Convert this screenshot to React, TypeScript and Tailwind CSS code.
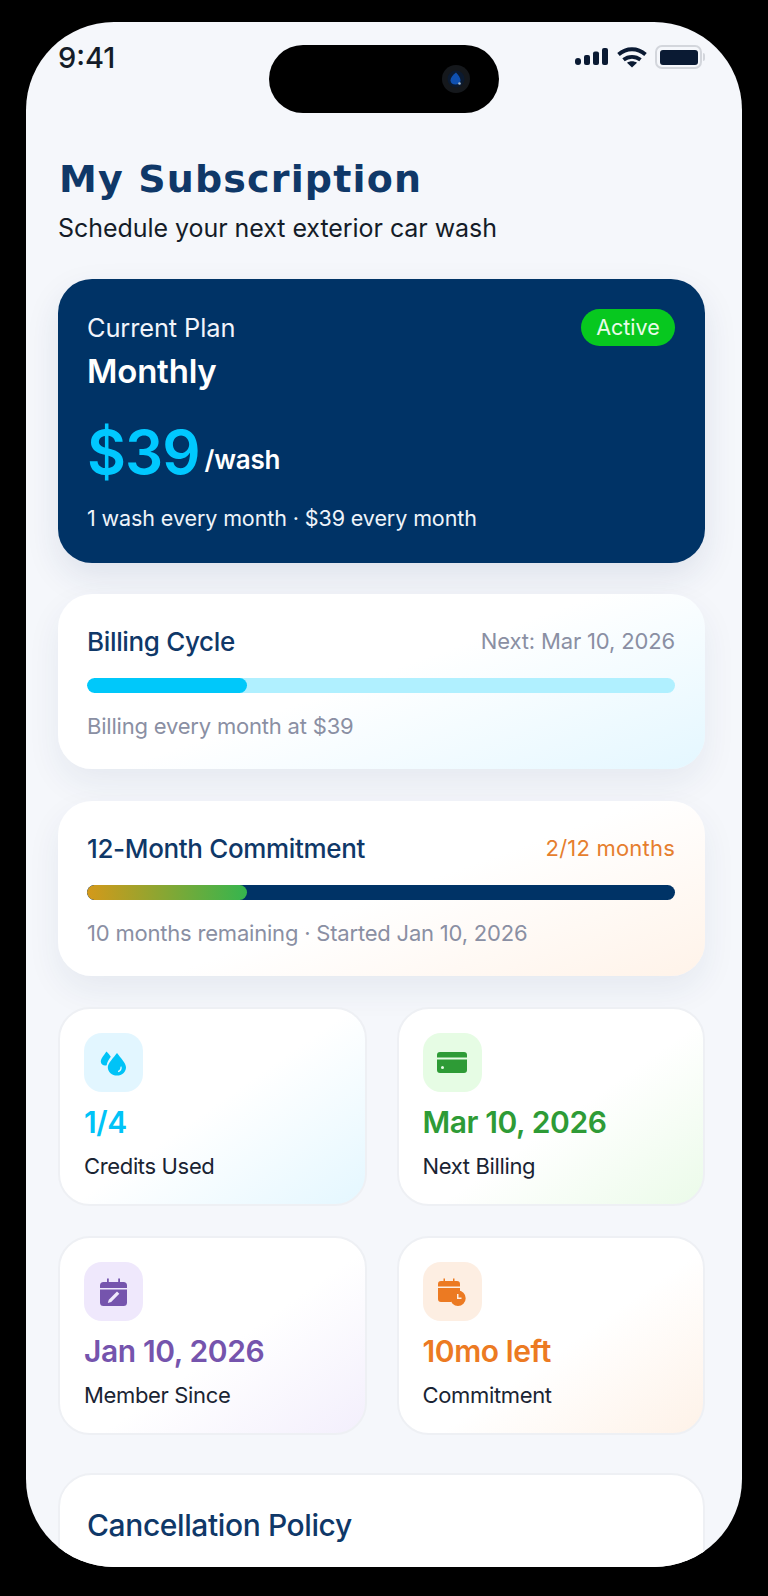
import React from "react";

const Signal = () => (
  <svg width="33" height="18" viewBox="0 0 33 18" fill="#0a1a33">
    <rect x="0" y="10" width="6" height="7" rx="3" />
    <rect x="9" y="7" width="6" height="10" rx="2" />
    <rect x="18" y="3.5" width="6" height="13.5" rx="2" />
    <rect x="27" y="0" width="6" height="17" rx="2" />
  </svg>
);

const Wifi = () => (
  <svg width="30" height="21" viewBox="0 0 30 21" fill="none" stroke="#0a1a33" strokeWidth="3.8">
    <path d="M1.500 7.500C9.500 0.500 20.500 0.500 28.500 7.500" />
    <path d="M6.500 12.800C11.500 8.800 18.500 8.800 23.500 12.800" />
    <path d="M15 20.500L10 15.800C12.800 13.800 17.200 13.800 20 15.800Z" fill="#0a1a33" stroke="none" />
  </svg>
);

const Battery = () => (
  <div className="flex items-center">
    <div className="flex h-[24px] w-[47px] items-center justify-center rounded-[7px] border-[2px] border-[#d3d6dc]">
      <div className="h-[15px] w-[38px] rounded-[3px] bg-[#0a1a33]" />
    </div>
    <div className="ml-[1px] h-[8px] w-[2px] rounded-r-[2px] bg-[#d3d6dc]" />
  </div>
);

const Camera = () => (
  <svg width="28" height="28" viewBox="0 0 28 28">
    <circle cx="14" cy="14" r="14" fill="#15181c" />
    <circle cx="14" cy="14" r="8.500" fill="#0b1a30" />
    <path d="M14 7.500C10.500 10 8.500 13 8.500 15.500C8.500 18 10.500 19.500 13.500 19.500C16.500 19.500 18.500 18 18.500 15.500C18.500 13 16.500 10 14 7.500Z" fill="#0f50b0" />
    <circle cx="17.500" cy="18.500" r="1.300" fill="#9fb4c8" />
  </svg>
);

const Drops = () => (
  <svg width="27" height="26" viewBox="0 0 27 26" fill="#00c3f7">
    <path d="M6.500 1.500C4 5 0.800 8.800 0.800 11.500C0.800 14 3 15.600 5 15.600C5.600 15.600 6.200 15.400 6.700 15.200C7 12.200 9 9.300 10.800 6.800C9.800 5 8 3.200 6.500 1.500Z" />
    <path fillRule="evenodd" d="M17 3C13.500 8 7.800 13 7.800 17.300C7.800 22 12 25.600 17 25.600C22 25.600 26 22 26 17.300C26 13 20.500 8 17 3ZM21.600 16.500C22.200 19.200 20.800 21.600 18.200 22.200L17.900 20.900C19.800 20.400 20.800 18.700 20.400 16.800Z" />
  </svg>
);

const CardIcon = () => (
  <svg width="30" height="21" viewBox="0 0 30 21" fill="#2e9b36">
    <path d="M0 5.500V3a3 3 0 0 1 3-3h24a3 3 0 0 1 3 3v2.500Z" />
    <path fillRule="evenodd" d="M0 7.500h30V18a3 3 0 0 1-3 3H3a3 3 0 0 1-3-3ZM5.500 14a1.500 1.500 0 1 0 0 3a1.500 1.500 0 0 0 0-3Z" />
  </svg>
);

const CalEdit = () => (
  <svg width="27" height="28" viewBox="0 0 27 28" fill="#7554ad">
    <path d="M7 0.500h1.800V4H18.200V0.500H20V4H23.500A3.500 3.500 0 0 1 27 7.500V10H0V7.500A3.500 3.500 0 0 1 3.500 4H7Z" />
    <path fillRule="evenodd" d="M0 11.500H27V24.500A3.500 3.500 0 0 1 23.500 28H3.500A3.500 3.500 0 0 1 0 24.500ZM17 13.500L8.800 21.700L7.800 25L11.200 24L19.300 15.800Z" />
  </svg>
);

const CalClock = () => (
  <svg width="28" height="28" viewBox="0 0 28 28" fill="#ec7a22">
    <path d="M5.500 0.500H7V3H15V0.500H16.500V3H19A3 3 0 0 1 22 6V8.500H0V6A3 3 0 0 1 3 3H5.500Z" />
    <path d="M0 10H22V13.200A8 8 0 0 0 13.500 24H3A3 3 0 0 1 0 21Z" />
    <path fillRule="evenodd" d="M20 12.500A7.700 7.700 0 1 1 20 27.900A7.700 7.700 0 0 1 20 12.500ZM19 16V21H23.500V19.500H20.500V16Z" />
  </svg>
);

const cardCls =
  "rounded-[34px] pl-[29px] pr-[30px] shadow-[0_14px_34px_rgba(30,50,100,0.07)] h-[175px] flex flex-col";

function ProgressCard(p: {
  title: string;
  right: string;
  rightCls: string;
  note: string;
  grad: string;
  track: string;
  fill: string;
  mt: string;
}) {
  return (
    <div className={`${cardCls} ${p.mt} ${p.grad}`}>
      <div className="mt-[29px] flex h-[36px] items-center justify-between">
        <span className="text-[26px] font-medium tracking-[-0.35px] text-[#0f3868]">{p.title}</span>
        <span className={`text-[22px] ${p.rightCls}`}>{p.right}</span>
      </div>
      <div className={`mt-[19px] h-[15px] w-full overflow-hidden rounded-full ${p.track}`}>
        <div className={`h-full w-[160px] rounded-full ${p.fill}`} />
      </div>
      <div className="mt-[18px] h-[30px] text-[22px] leading-[30px] tracking-[-0.2px] text-[#8a8fa3]">{p.note}</div>
    </div>
  );
}

function Tile(p: {
  icon: React.ReactNode;
  iconBg: string;
  value: string;
  valueCls: string;
  label: string;
  grad: string;
}) {
  return (
    <div className={`h-[199px] rounded-[32px] border-[2px] border-[#eef0f4] px-[24px] pt-[24px] ${p.grad}`}>
      <div className={`flex h-[59px] w-[59px] items-center justify-center rounded-[18px] ${p.iconBg}`}>{p.icon}</div>
      <div className={`mt-[11px] h-[38px] text-[30px] leading-[38px] font-semibold tracking-[-0.4px] ${p.valueCls}`}>{p.value}</div>
      <div className="mt-[10px] h-[30px] text-[22px] leading-[30px] tracking-[-0.35px] text-[#1a2433]">{p.label}</div>
    </div>
  );
}

export default function App() {
  return (
    <div className="h-[1596px] w-[768px] overflow-hidden bg-black pt-[22px] pl-[26px] font-['Inter',sans-serif]">
      <div className="relative h-[1545px] w-[716px] overflow-hidden rounded-[88px] bg-[#f5f7fb] pr-[37px] pl-[32px]">
        <div className="absolute top-[23px] left-[243px] flex h-[68px] w-[230px] items-center justify-end rounded-[34px] bg-black pr-[29px]">
          <Camera />
        </div>

        <div className="flex h-[46px] items-center justify-between pt-[24px]">
          <span className="text-[29px] leading-none font-medium text-[#141c28]">9:41</span>
          <div className="flex items-center">
            <Signal />
            <div className="ml-[9px]">
              <Wifi />
            </div>
            <div className="ml-[8px]">
              <Battery />
            </div>
          </div>
        </div>

        <h1 className="mt-[89px] ml-[1px] h-[44px] font-['DejaVu_Sans',sans-serif] text-[38px] leading-[44px] font-bold tracking-[1.15px] text-[#0f3868]">
          My Subscription
        </h1>
        <p className="mt-[10px] h-[34px] text-[25px] leading-[34px] tracking-[-0.05px] text-[#141c28]">
          Schedule your next exterior car wash
        </p>

        <div className="mt-[34px] h-[284px] rounded-[34px] bg-[#003366] pt-[30px] pr-[30px] pl-[29px] text-white shadow-[0_14px_34px_rgba(30,50,100,0.1)]">
          <div className="flex items-start justify-between">
            <div className="h-[38px] text-[25.4px] leading-[38px] tracking-[-0.1px] text-[#f1f5fb]">Current Plan</div>
            <div className="flex h-[37px] w-[94px] items-center justify-center rounded-full bg-[#07c81f] text-[21.5px] text-[#eafbe9]">Active</div>
          </div>
          <div className="mt-[2px] h-[44px] text-[33px] leading-[44px] font-semibold tracking-[-0.2px]">Monthly</div>
          <div className="mt-[23px] flex h-[72px] items-start gap-[5px]">
            <span className="text-[60px] leading-[72px] font-semibold tracking-[-1px] text-[#00c8ff]">$39</span>
            <span className="mt-[24px] text-[26px] leading-[40px] font-semibold tracking-[-0.2px]">/wash</span>
          </div>
          <div className="mt-[12px] h-[36px] text-[21.5px] leading-[36px] tracking-[-0.1px] text-[#eef3fa]">
            1 wash every month · $39 every month
          </div>
        </div>

        <ProgressCard
          mt="mt-[31px]"
          title="Billing Cycle"
          right="Next: Mar 10, 2026"
          rightCls="tracking-[-0.15px] text-[#8a8fa3]"
          note="Billing every month at $39"
          grad="bg-[linear-gradient(160deg,#ffffff_48%,#e4f7ff_100%)]"
          track="bg-[#b0f0ff]"
          fill="bg-[#00c8fa]"
        />
        <ProgressCard
          mt="mt-[32px]"
          title="12-Month Commitment"
          right="2/12 months"
          rightCls="tracking-[0.2px] text-[#e67e2e]"
          note="10 months remaining · Started Jan 10, 2026"
          grad="bg-[linear-gradient(160deg,#ffffff_52%,#fff3e9_100%)]"
          track="bg-[#003366]"
          fill="bg-[linear-gradient(90deg,#d4991a,#35b54e)]"
        />

        <div className="mt-[31px] grid grid-cols-2 gap-x-[30px] gap-y-[30px]">
          <Tile
            icon={<Drops />}
            iconBg="bg-[#e2f6ff]"
            value="1/4"
            valueCls="text-[#00c3f7]"
            label="Credits Used"
            grad="bg-[linear-gradient(145deg,#ffffff_50%,#e4f7ff_100%)]"
          />
          <Tile
            icon={<CardIcon />}
            iconBg="bg-[#e6fce4]"
            value="Mar 10, 2026"
            valueCls="text-[#2e9b36]"
            label="Next Billing"
            grad="bg-[linear-gradient(145deg,#ffffff_55%,#ebfbe9_100%)]"
          />
          <Tile
            icon={<CalEdit />}
            iconBg="bg-[#efe8fc]"
            value="Jan 10, 2026"
            valueCls="text-[#7554ad]"
            label="Member Since"
            grad="bg-[linear-gradient(145deg,#ffffff_55%,#f3effc_100%)]"
          />
          <Tile
            icon={<CalClock />}
            iconBg="bg-[#fdeee2]"
            value="10mo left"
            valueCls="text-[#ec7a22]"
            label="Commitment"
            grad="bg-[linear-gradient(145deg,#ffffff_55%,#fef2e8_100%)]"
          />
        </div>

        <div className="mt-[38px] h-[200px] rounded-[34px] border-[2px] border-[#eef0f4] bg-white pt-[30px] pr-[28px] pl-[27px]">
          <div className="h-[40px] text-[30px] leading-[40px] font-medium tracking-[-0.4px] text-[#0f3868]">Cancellation Policy</div>
        </div>
      </div>
    </div>
  );
}
